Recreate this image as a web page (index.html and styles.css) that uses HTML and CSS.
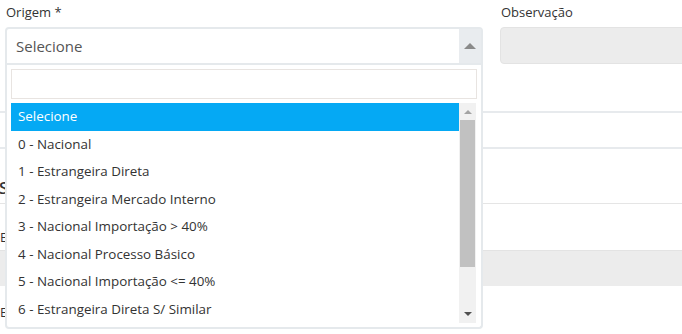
FILE: index.html
```html
<!DOCTYPE html>
<html lang="pt-BR">
<head>
  <meta charset="UTF-8" />
  <meta name="viewport" content="width=device-width, initial-scale=1.0" />
  <title>Produto - Origem</title>
  <link rel="stylesheet" href="styles.css">
</head>
<body>
  <div class="page">
    <div class="row">
      <div class="field origem">
        <label>Origem *</label>
        <div class="select open">
          <span class="select-text">Selecione</span>
          <span class="select-arrow"></span>
        </div>

        <div class="dropdown">
          <input type="text" class="search">
          <div class="list-wrap">
            <ul class="options">
              <li class="active">Selecione</li>
              <li>0 - Nacional</li>
              <li>1 - Estrangeira Direta</li>
              <li>2 - Estrangeira Mercado Interno</li>
              <li>3 - Nacional Importação &gt; 40%</li>
              <li>4 - Nacional Processo Básico</li>
              <li>5 - Nacional Importação &lt;= 40%</li>
              <li>6 - Estrangeira Direta S/ Similar</li>
            </ul>
            <div class="scrollbar">
              <span class="sb-btn up"></span>
              <span class="sb-thumb"></span>
              <span class="sb-fill"></span>
              <span class="sb-btn down"></span>
            </div>
          </div>
        </div>
      </div>

      <div class="field obs">
        <label>Observação</label>
        <div class="input disabled"></div>
      </div>
    </div>

    <div class="rule first"></div>
    <div class="rule second"></div>

    <h3 class="section">Saldos</h3>

    <label class="sub">Estoque mínimo</label>
    <div class="input wide disabled"></div>
    <label class="sub">Estoque máximo</label>
  </div>
</body>
</html>
```

FILE: styles.css
```css
body {
  font-family: 'Open Sans', 'Liberation Sans', sans-serif;
  margin: 0;
  background: white;
  color: #333;
  overflow: hidden;
}
.page {
  width: 682px;
  height: 334px;
  overflow: hidden;
}
.row {
  display: flex;
  gap: 17px;
  padding-left: 5px;
}
.field {
  position: relative;
  flex-shrink: 0;
}
.origem {
  width: 478px;
}
.obs {
  width: 220px;
}
label {
  display: block;
  font-size: 13px;
  line-height: 17px;
  margin: 4px 0 6px 1px;
  color: #333;
}
.select {
  display: flex;
  height: 34px;
  border: 2px solid #e5e9ec;
  border-radius: 4px 4px 0 0;
  background: white;
}
.select-text {
  flex: 1;
  padding-left: 9px;
  font-size: 15px;
  line-height: 34px;
  color: #555;
}
.select-arrow {
  width: 22px;
  background: #e9ecef;
  position: relative;
}
.select-arrow::after {
  content: "";
  position: absolute;
  left: 5px;
  top: 14px;
  border-left: 6px solid transparent;
  border-right: 6px solid transparent;
  border-bottom: 6px solid #8a8a8a;
}
.input {
  height: 35px;
  background: #ececec;
  border: 1px solid #e3e3e3;
  border-radius: 4px;
}

/* aberto */
.dropdown {
  position: absolute;
  top: 65px;
  left: 0;
  width: 466px;
  padding: 4px;
  background: white;
  border: 2px solid #e5e9ec;
  border-top: none;
  border-radius: 0 0 4px 4px;
}
.search {
  display: block;
  box-sizing: border-box;
  width: 466px;
  height: 30px;
  margin: 0 0 4px;
  border: 1px solid #e8e4e1;
  outline: none;
}
.list-wrap {
  display: flex;
  width: 465px;
  height: 220px;
}
.options {
  flex: 1;
  list-style: none;
  margin: 0;
  padding: 0;
  font-size: 13.4px;
}
.options li {
  padding: 5px 7px;
  line-height: 17.5px;
  color: #333;
}
.options li.active {
  background: #05a9f4;
  color: white;
}
.scrollbar {
  width: 17px;
  display: flex;
  flex-direction: column;
  background: #f1f1f1;
}
.sb-btn {
  height: 17px;
  position: relative;
}
.sb-btn::after {
  content: "";
  position: absolute;
  left: 5px;
  border-left: 4px solid transparent;
  border-right: 4px solid transparent;
}
.sb-btn.up::after {
  top: 7px;
  border-bottom: 4px solid #a3a3a3;
}
.sb-btn.down::after {
  top: 6px;
  border-top: 4px solid #505050;
}
.sb-thumb {
  height: 147px;
  margin: 0 1px;
  background: #c1c1c1;
}
.sb-fill {
  flex: 1;
}

/* por trás */
.rule {
  height: 2px;
  background: #e7eaed;
}
.rule.first {
  margin-top: 46px;
}
.rule.second {
  margin-top: 34px;
}
.section {
  margin: 0;
  padding: 28px 0 4px;
  font-size: 17px;
  font-weight: 600;
  line-height: 22px;
  color: #333;
  border-bottom: 1px solid #e5e5e5;
  margin-left: -1px;
}
.sub {
  margin: 25px 0 4px 0;
}
.input.wide {
  border-radius: 0;
  border-width: 1px 0 0;
}
.sub + .input + .sub {
  margin-top: 18px;
}
```
